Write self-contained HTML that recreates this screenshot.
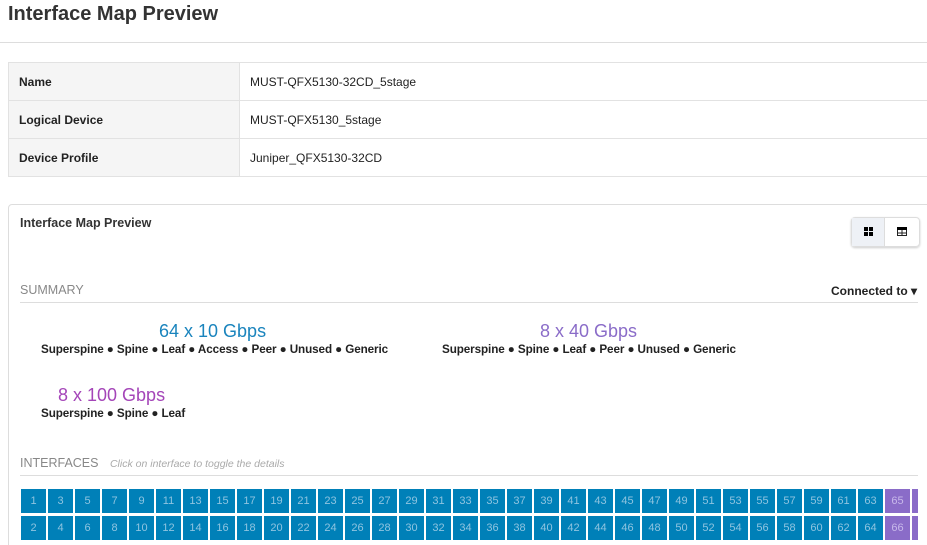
<!DOCTYPE html><html style="overflow:hidden;height:545px"><head><style>
body{margin:0;width:927px;height:545px;overflow:hidden;background:#fff;font-family:"Liberation Sans",sans-serif;color:#222;position:relative}
.a{position:absolute}
h1{position:absolute;left:8px;top:3px;margin:0;font-size:20px;font-weight:bold;color:#333}
table{position:absolute;left:8px;top:62px;width:925px;border-collapse:collapse;font-size:12px}
td{border:1px solid #e2e2e2;height:37px;padding:0 10px}
td.l{background:#f5f5f5;font-weight:bold;width:210px}
.card{left:8px;top:204px;width:925px;height:345px;border:1px solid #ddd;border-radius:4px}
.c{position:absolute;width:25px;height:24px;background:#0080b8;color:#8fc4e0;font-size:11px;text-align:center;line-height:24px}
.p{background:#8a6cc8;color:#c8b8ea}
.big{font-size:18px}
.sub{font-size:11.7px;font-weight:bold;color:#222;letter-spacing:-0.1px}
</style></head><body>
<h1>Interface Map Preview</h1>
<div class="a" style="left:0;top:42px;width:927px;height:1px;background:#ddd"></div>
<table><tr><td class="l">Name</td><td>MUST-QFX5130-32CD_5stage</td></tr>
<tr><td class="l">Logical Device</td><td>MUST-QFX5130_5stage</td></tr>
<tr><td class="l">Device Profile</td><td>Juniper_QFX5130-32CD</td></tr></table>
<div class="a card"></div>
<div class="a" style="left:20px;top:216px;font-size:12.5px;font-weight:bold;color:#333">Interface Map Preview</div>
<div class="a" style="left:851px;top:217px;width:67px;height:28px;border:1px solid #ddd;border-radius:4px;box-shadow:0 1px 2px #ccc">
<div class="a" style="left:0;top:0;width:32px;height:28px;background:#eef1f6;border-right:1px solid #ddd"></div>
<svg class="a" style="left:12px;top:9px" width="10" height="10"><rect x="0" y="0" width="4" height="4"/><rect x="5" y="0" width="4" height="4"/><rect x="0" y="5" width="4" height="4"/><rect x="5" y="5" width="4" height="4"/></svg>
<svg class="a" style="left:45px;top:9px" width="10" height="10"><rect x="0.5" y="0.5" width="9" height="8" fill="none" stroke="#222"/><rect x="0" y="0" width="10" height="3"/><line x1="5" y1="3" x2="5" y2="9" stroke="#222"/><line x1="0" y1="6" x2="10" y2="6" stroke="#222"/></svg>
</div>
<div class="a" style="left:20px;top:283px;font-size:12.5px;color:#888">SUMMARY</div>
<div class="a" style="left:831px;top:284px;font-size:12px;font-weight:bold">Connected to ▾</div>
<div class="a" style="left:20px;top:302px;width:898px;height:1px;background:#ddd"></div>
<div class="a big" style="left:159px;top:321px;color:#1a84bd">64 x 10 Gbps</div>
<div class="a sub" style="left:41px;top:343px">Superspine ● Spine ● Leaf ● Access ● Peer ● Unused ● Generic</div>
<div class="a big" style="left:540px;top:321px;color:#8a6cc8">8 x 40 Gbps</div>
<div class="a sub" style="left:442px;top:343px">Superspine ● Spine ● Leaf ● Peer ● Unused ● Generic</div>
<div class="a big" style="left:58px;top:385px;color:#a445b8">8 x 100 Gbps</div>
<div class="a sub" style="left:41px;top:407px">Superspine ● Spine ● Leaf</div>
<div class="a" style="left:20px;top:456px;font-size:12.5px;color:#888">INTERFACES <i style="font-size:10.5px;color:#aaa;margin-left:8px">Click on interface to toggle the details</i></div>
<div class="a" style="left:20px;top:475px;width:898px;height:1px;background:#ddd"></div>
<div id="g"></div>
<script>
var h='';for(var i=0;i<34;i++){var x=21+i*27,cl=i>=32?'c p':'c',st=i==33?'width:6px;color:transparent;':'';h+='<div class="'+cl+'" style="'+st+'left:'+x+'px;top:489px">'+(2*i+1)+'</div><div class="'+cl+'" style="'+st+'left:'+x+'px;top:516px">'+(2*i+2)+'</div>';}
document.getElementById('g').innerHTML=h;
</script>
</body></html>
